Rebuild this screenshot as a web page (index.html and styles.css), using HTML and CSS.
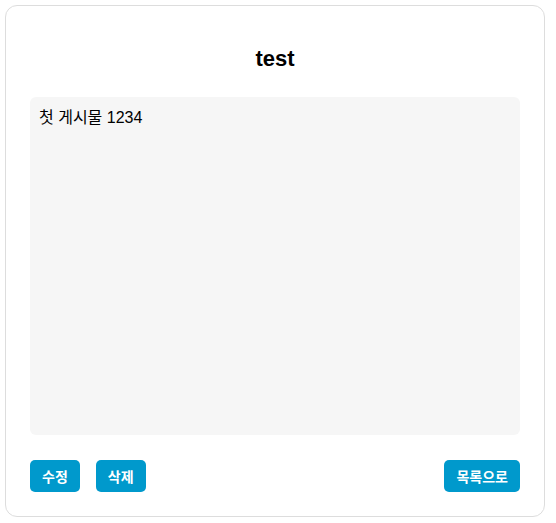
FILE: index.html
```html
<!DOCTYPE html>
<html lang="ko">
<head>
<meta charset="utf-8">
<link rel="stylesheet" href="styles.css">
</head>
<body>
<div class="card">
  <h2 class="title">test</h2>
  <div class="content">첫 게시물 1234</div>
  <div class="actions">
    <div class="left">
      <button class="btn">수정</button>
      <button class="btn">삭제</button>
    </div>
    <button class="btn">목록으로</button>
  </div>
</div>
</body>
</html>
```
FILE: styles.css
```css
html, body { margin: 0; padding: 0; background: #fff; }
body {
  padding: 5px;
  font-family: "Liberation Sans", Arial, "Noto Sans CJK KR", sans-serif;
  color: #000;
}
.card {
  width: 540px;
  height: 512px;
  box-sizing: border-box;
  border: 1px solid #dddddd;
  border-radius: 12px;
  padding: 24px;
  display: flex;
  flex-direction: column;
}
.title {
  margin: 16px 0 26px;
  font-size: 22px;
  line-height: 25px;
  font-weight: bold;
  text-align: center;
}
.content {
  height: 339px;
  box-sizing: border-box;
  background: #f6f6f6;
  border-radius: 6px;
  padding: 12px 9px;
  font-size: 16px;
  line-height: 18px;
}
.actions {
  margin-top: 25px;
  display: flex;
  justify-content: space-between;
}
.left { display: flex; gap: 16px; }
.btn {
  height: 32px;
  padding: 0 12px;
  border: none;
  border-radius: 5px;
  background: #0099cc;
  color: #fff;
  font-family: "Liberation Sans", Arial, "Noto Sans CJK KR", sans-serif;
  font-size: 14px;
  font-weight: bold;
  cursor: pointer;
}
```
